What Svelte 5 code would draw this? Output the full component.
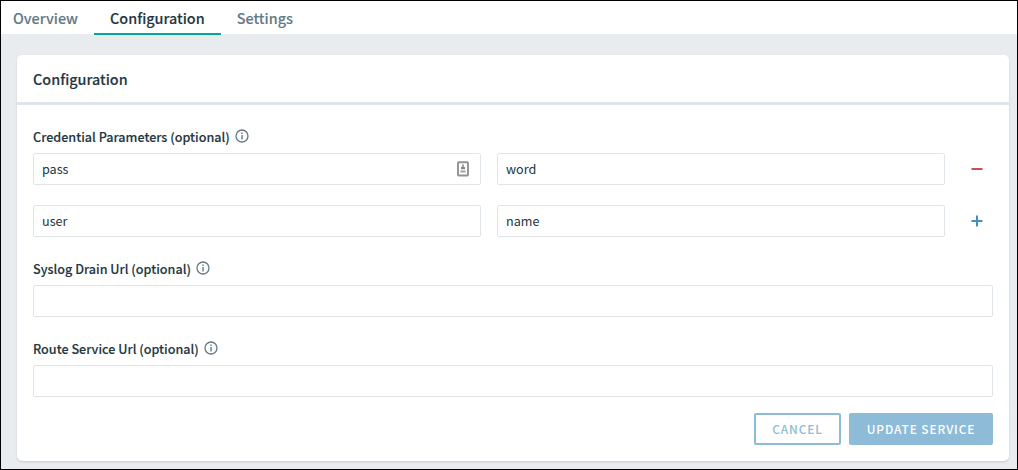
<script>
  let rows = $state([
    { key: 'pass', value: 'word', last: false },
    { key: 'user', value: 'name', last: true }
  ]);
  let syslog = $state('');
  let route = $state('');
</script>

{#snippet info()}
  <svg class="info" viewBox="0 0 14 14" width="14" height="14">
    <circle cx="7" cy="7" r="6" fill="none" stroke="#647a86" stroke-width="1.3" />
    <rect x="6.3" y="3.5" width="1.4" height="1.5" fill="#647a86" />
    <path d="M7 6v4.5" stroke="#647a86" stroke-width="1.4" />
  </svg>
{/snippet}

<div class="page">
  <nav>
    <span class="tab overview">Overview</span>
    <span class="tab active">Configuration</span>
    <span class="tab">Settings</span>
  </nav>
  <main>
    <section class="card">
      <header><h1>Configuration</h1></header>
      <form>
        <div class="label">Credential Parameters (optional){@render info()}</div>
        {#each rows as row}
          <div class="row">
            <div class="field">
              <input bind:value={row.key} />
              {#if !row.last}
                <svg class="keyicon" viewBox="0 0 12 16" width="12" height="16">
                  <rect x="1" y="1.3" width="10" height="13.2" rx="0.7" fill="#fff" stroke="#929292" stroke-width="1.9" />
                  <rect x="5.1" y="3.4" width="1.8" height="3" fill="#999" />
                  <rect x="4" y="6" width="4" height="2.2" fill="#888" />
                  <rect x="3.4" y="9.4" width="5.2" height="2.2" fill="#aaa" />
                </svg>
              {/if}
            </div>
            <div class="field"><input bind:value={row.value} /></div>
            <div class="action">
              <svg viewBox="0 0 12 12" width="12" height="12">
                {#if row.last}
                  <path d="M.5 6h11M6 .5v11" stroke="#3f8fc5" stroke-width="2" />
                {:else}
                  <path d="M.5 6h11" stroke="#c94f58" stroke-width="2" />
                {/if}
              </svg>
            </div>
          </div>
        {/each}
        <div class="label later">Syslog Drain Url (optional){@render info()}</div>
        <input bind:value={syslog} />
        <div class="label later">Route Service Url (optional){@render info()}</div>
        <input bind:value={route} />
        <div class="buttons">
          <button type="button" class="cancel">CANCEL</button>
          <button type="button" class="update">UPDATE SERVICE</button>
        </div>
      </form>
    </section>
  </main>
</div>

<style>
  :global(body) { margin: 0; }
  * { box-sizing: border-box; }
  .page {
    height: 470px;
    border: 1px solid #000;
    background: #e8ecef;
    overflow: hidden;
    font-family: "Noto Sans CJK SC", "Noto Sans", sans-serif;
    color: #243640;
    display: flex;
    flex-direction: column;
  }
  nav { height: 33px; flex: none; background: #fff; display: flex; }
  .tab {
    height: 34px;
    padding: 0 16px;
    line-height: 33px;
    font-size: 14.4px;
    font-weight: 500;
    color: #647a86;
    white-space: nowrap;
    -webkit-text-stroke: 0.12px;
  }
  .overview { padding-left: 12px; }
  .active { color: #243640; border-bottom: 2px solid #00a79d; }
  main { padding: 21px 8px 8px 16px; }
  .card {
    height: 406px;
    border-radius: 5px;
    background: #fff;
    box-shadow: 0 1px 2px rgba(36, 54, 64, 0.18);
  }
  header { height: 50px; padding-left: 16px; border-bottom: 3px solid #dfe5e8; }
  h1 { margin: 0; font-size: 14.4px; font-weight: 500; line-height: 47px; -webkit-text-stroke: 0.12px; }
  form { padding: 22px 16px 0; }
  .label {
    display: flex;
    height: 26px;
    line-height: 20px;
    font-size: 12.6px;
    font-weight: 500;
    white-space: nowrap;
    -webkit-text-stroke: 0.12px;
  }
  .info { margin: 2px 0 0 5px; }
  .row { display: flex; gap: 16px; margin-bottom: 20px; }
  .field { width: 448px; position: relative; }
  .keyicon { position: absolute; right: 12px; top: 8px; }
  input {
    display: block;
    width: 100%;
    height: 32px;
    padding: 0 8px 2px;
    border: 1px solid #dfe5e8;
    border-radius: 2px;
    background: #fff;
    color: #243640;
    font: 400 12.6px "Noto Sans CJK SC", "Noto Sans", sans-serif;
    outline: none;
  }
  .action { width: 32px; display: flex; align-items: center; justify-content: center; }
  .later { margin-top: 22px; }
  .buttons { display: flex; justify-content: flex-end; gap: 8px; margin-top: 16px; }
  button {
    height: 32px;
    padding: 0;
    border: 2px solid #8dbbd8;
    border-radius: 2px;
    font: 500 11.9px/26px "Noto Sans CJK SC", "Noto Sans", sans-serif;
    letter-spacing: 0.9px;
    white-space: nowrap;
  }
  .cancel { width: 87px; background: #fff; color: #8dbbd8; }
  .update { width: 144px; background: #8dbbd8; color: #fff; }
</style>
